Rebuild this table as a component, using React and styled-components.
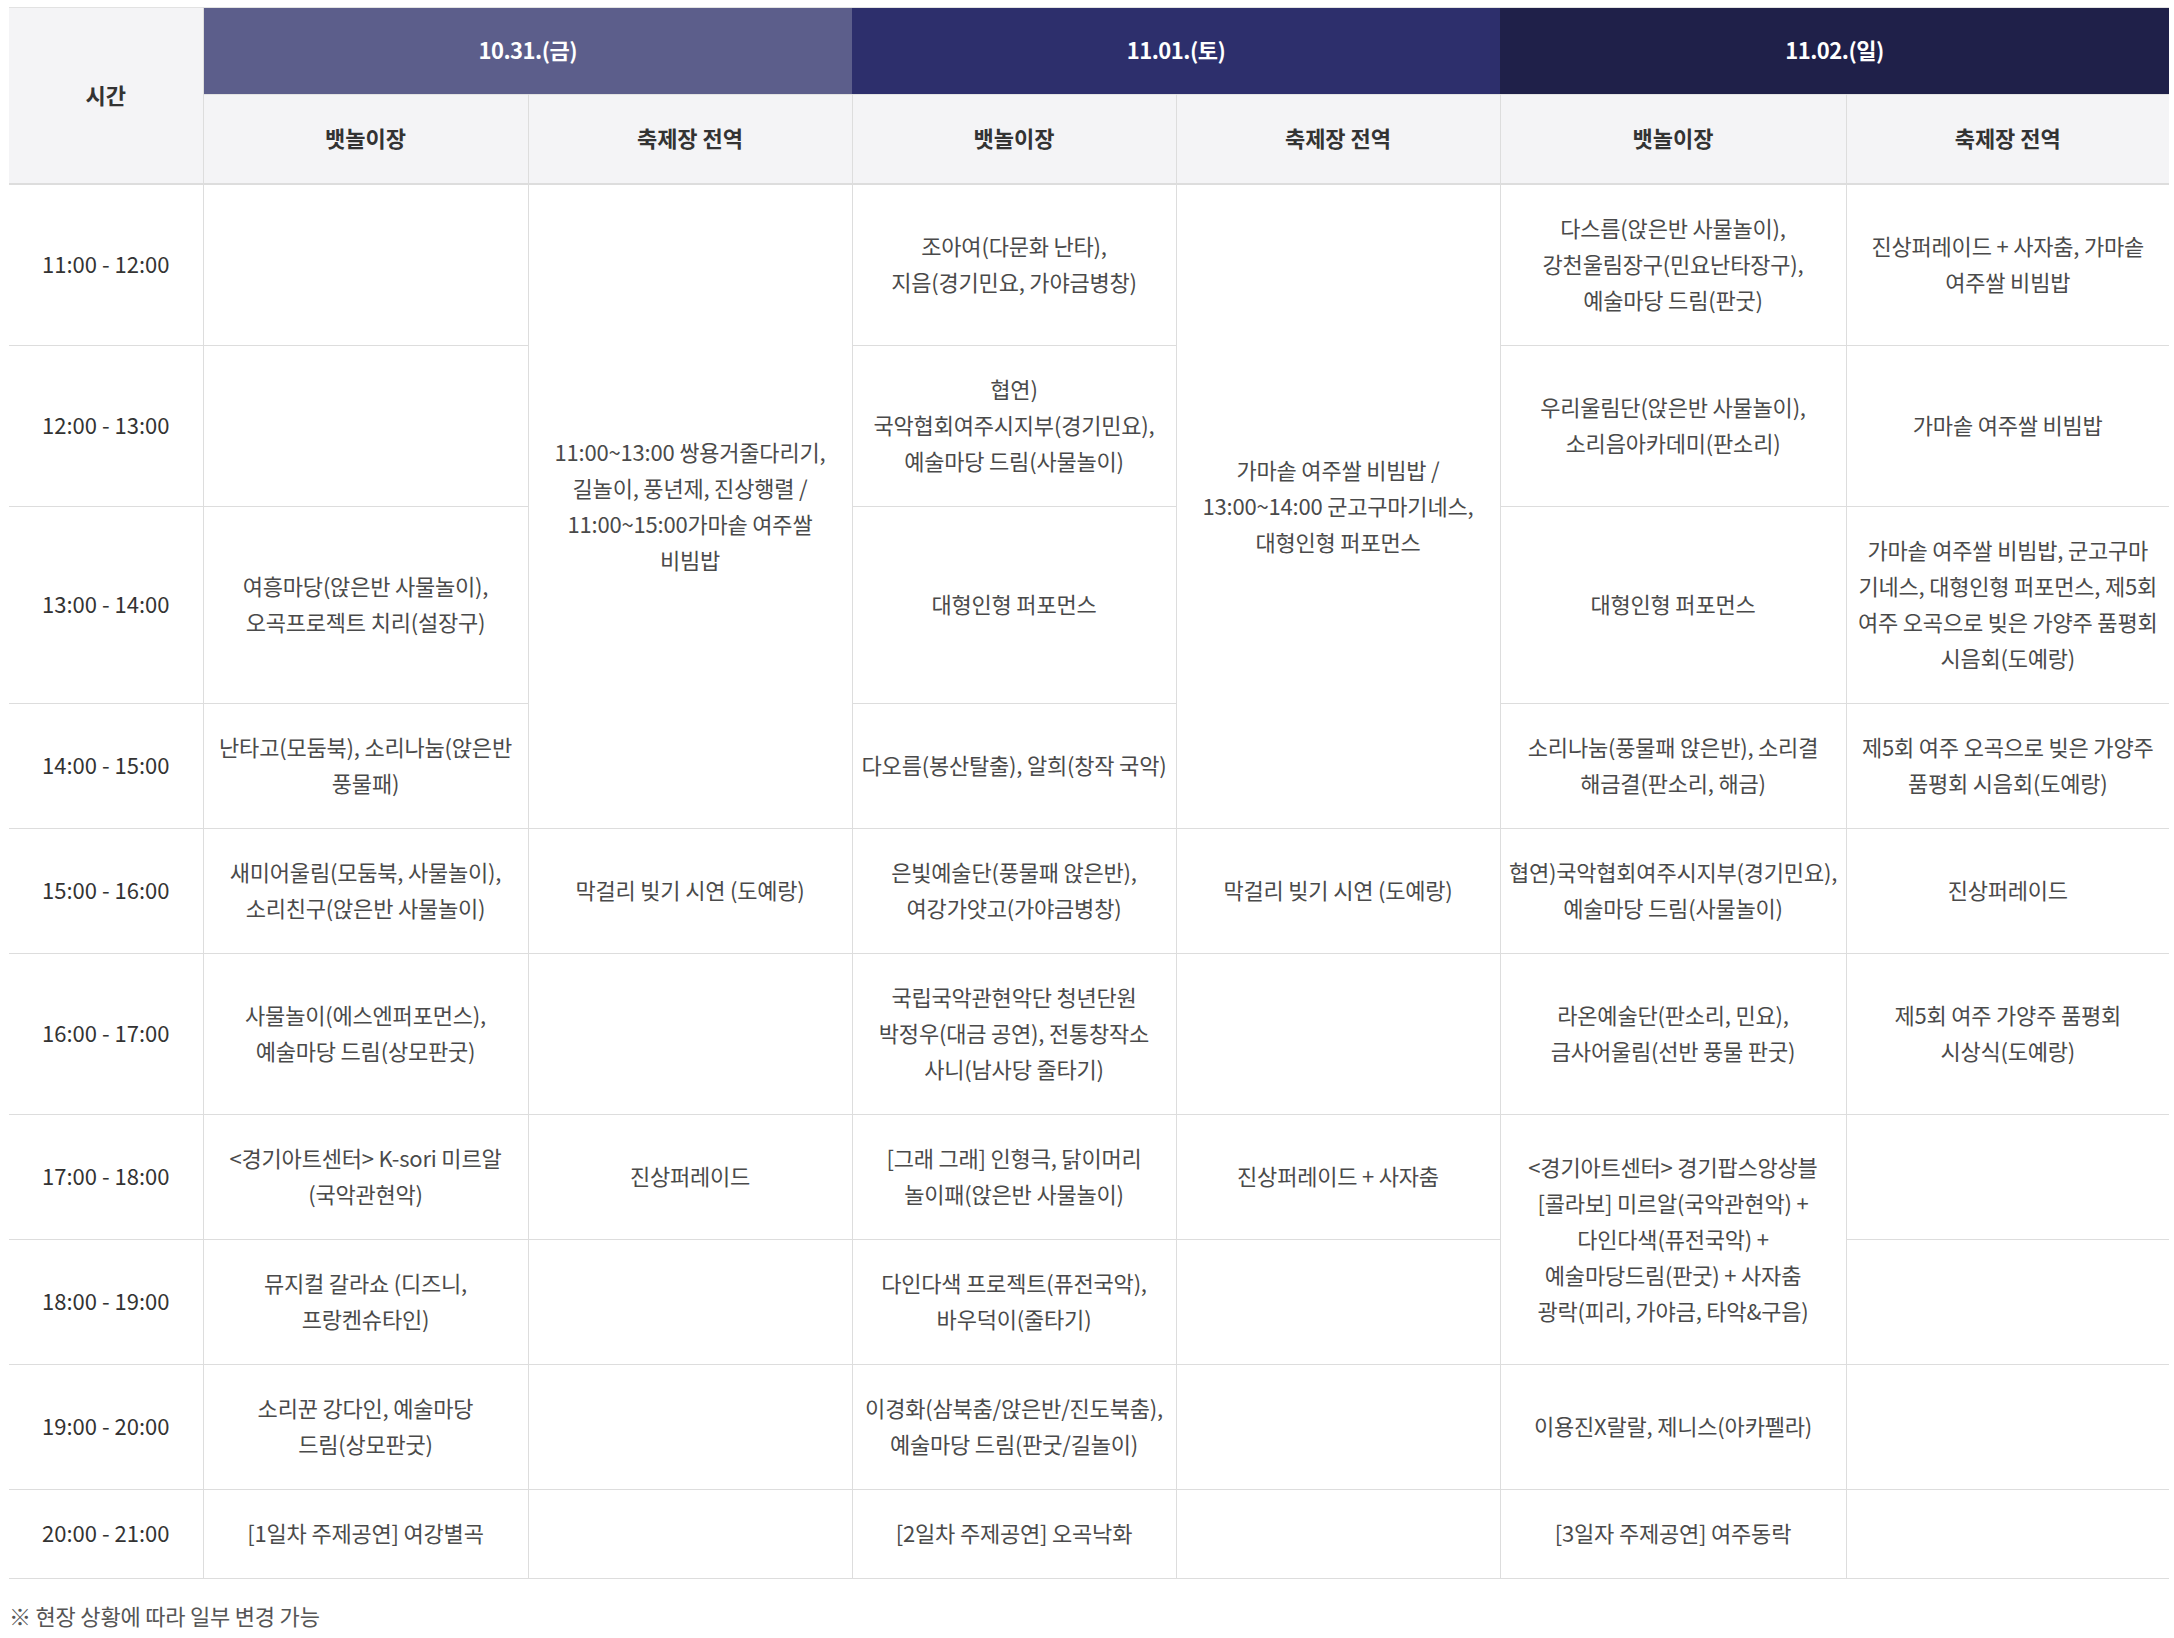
import React from "react";
import styled, { createGlobalStyle } from "styled-components";

const Global = createGlobalStyle`
  html, body { margin: 0; padding: 0; background: #ffffff; }
  body { font-family: "Noto Sans CJK KR", "Noto Sans", sans-serif; }
`;

const Page = styled.div`
  padding: 7px 5px 20px 9px;
`;

const Table = styled.table`
  width: 2160px;
  table-layout: fixed;
  border-collapse: collapse;
  border-top: 1px solid #e2e2e2;
  font-size: 22px;
  line-height: 36px;
  color: #4a4a4a;
  text-align: center;
`;

const DateCell = styled.th`
  background: ${(p) => p.$bg};
  color: #ffffff;
  font-weight: 700;
  padding: 23px 8px 27px;
  letter-spacing: -0.5px;
`;

const HeadCell = styled.th`
  background: #f4f4f6;
  color: #333333;
  font-weight: 700;
  padding: 24px 8px 28px;
  border: 1px solid #dddddd;
  border-bottom: 2px solid #dddddd;
  border-top-color: #e2e2e2;
  &:first-child { border-left: none; }
  &:last-child { border-right: none; }
`;

const TimeCell = styled.td`
  color: #333333;
  padding: 24px 4px 28px;
  border-bottom: 1px solid #dddddd;
  border-right: 1px solid #dddddd;
  vertical-align: middle;
`;

const Cell = styled.td`
  padding: 24px 3px 28px;
  border: 1px solid #dddddd;
  border-top: none;
  vertical-align: middle;
  letter-spacing: -0.2px;
  &:last-child { border-right: none; }
`;

const Note = styled.p`
  margin: 18px 0 0;
  font-size: 22px;
  line-height: 36px;
  color: #555555;
  letter-spacing: -0.2px;
`;

const cols = [194, 325, 324, 324, 324, 346, 323];

const days = [
  { label: "10.31.(금)", bg: "#5c5e8b" },
  { label: "11.01.(토)", bg: "#2d2f6c" },
  { label: "11.02.(일)", bg: "#1f2049" },
];

// each cell: null = covered by rowspan, [] = empty, {lines, span}
const rows = [
  {
    time: "11:00 - 12:00",
    cells: [
      [],
      { lines: ["11:00~13:00 쌍용거줄다리기,", "길놀이, 풍년제, 진상행렬 /", "11:00~15:00가마솥 여주쌀", "비빔밥"], span: 4 },
      ["조아여(다문화 난타),", "지음(경기민요, 가야금병창)"],
      { lines: ["가마솥 여주쌀 비빔밥 /", "13:00~14:00 군고구마기네스,", "대형인형 퍼포먼스"], span: 4 },
      ["다스름(앉은반 사물놀이),", "강천울림장구(민요난타장구),", "예술마당 드림(판굿)"],
      ["진상퍼레이드 + 사자춤, 가마솥", "여주쌀 비빔밥"],
    ],
  },
  {
    time: "12:00 - 13:00",
    cells: [
      [],
      null,
      ["협연)", "국악협회여주시지부(경기민요),", "예술마당 드림(사물놀이)"],
      null,
      ["우리울림단(앉은반 사물놀이),", "소리음아카데미(판소리)"],
      ["가마솥 여주쌀 비빔밥"],
    ],
  },
  {
    time: "13:00 - 14:00",
    cells: [
      ["여흥마당(앉은반 사물놀이),", "오곡프로젝트 치리(설장구)"],
      null,
      ["대형인형 퍼포먼스"],
      null,
      ["대형인형 퍼포먼스"],
      ["가마솥 여주쌀 비빔밥, 군고구마", "기네스, 대형인형 퍼포먼스, 제5회", "여주 오곡으로 빚은 가양주 품평회", "시음회(도예랑)"],
    ],
  },
  {
    time: "14:00 - 15:00",
    cells: [
      ["난타고(모둠북), 소리나눔(앉은반", "풍물패)"],
      null,
      ["다오름(봉산탈출), 알희(창작 국악)"],
      null,
      ["소리나눔(풍물패 앉은반), 소리결", "해금결(판소리, 해금)"],
      ["제5회 여주 오곡으로 빚은 가양주", "품평회 시음회(도예랑)"],
    ],
  },
  {
    time: "15:00 - 16:00",
    cells: [
      ["새미어울림(모둠북, 사물놀이),", "소리친구(앉은반 사물놀이)"],
      ["막걸리 빚기 시연 (도예랑)"],
      ["은빛예술단(풍물패 앉은반),", "여강가얏고(가야금병창)"],
      ["막걸리 빚기 시연 (도예랑)"],
      ["협연)국악협회여주시지부(경기민요),", "예술마당 드림(사물놀이)"],
      ["진상퍼레이드"],
    ],
  },
  {
    time: "16:00 - 17:00",
    cells: [
      ["사물놀이(에스엔퍼포먼스),", "예술마당 드림(상모판굿)"],
      [],
      ["국립국악관현악단 청년단원", "박정우(대금 공연), 전통창작소", "사니(남사당 줄타기)"],
      [],
      ["라온예술단(판소리, 민요),", "금사어울림(선반 풍물 판굿)"],
      ["제5회 여주 가양주 품평회", "시상식(도예랑)"],
    ],
  },
  {
    time: "17:00 - 18:00",
    cells: [
      ["<경기아트센터> K-sori 미르알", "(국악관현악)"],
      ["진상퍼레이드"],
      ["[그래 그래] 인형극, 닭이머리", "놀이패(앉은반 사물놀이)"],
      ["진상퍼레이드 + 사자춤"],
      { lines: ["<경기아트센터> 경기팝스앙상블", "[콜라보] 미르알(국악관현악) +", "다인다색(퓨전국악) +", "예술마당드림(판굿) + 사자춤", "광락(피리, 가야금, 타악&구음)"], span: 2 },
      [],
    ],
  },
  {
    time: "18:00 - 19:00",
    cells: [
      ["뮤지컬 갈라쇼 (디즈니,", "프랑켄슈타인)"],
      [],
      ["다인다색 프로젝트(퓨전국악),", "바우덕이(줄타기)"],
      [],
      null,
      [],
    ],
  },
  {
    time: "19:00 - 20:00",
    cells: [
      ["소리꾼 강다인, 예술마당", "드림(상모판굿)"],
      [],
      ["이경화(삼북춤/앉은반/진도북춤),", "예술마당 드림(판굿/길놀이)"],
      [],
      ["이용진X랄랄, 제니스(아카펠라)"],
      [],
    ],
  },
  {
    time: "20:00 - 21:00",
    cells: [
      ["[1일차 주제공연] 여강별곡"],
      [],
      ["[2일차 주제공연] 오곡낙화"],
      [],
      ["[3일자 주제공연] 여주동락"],
      [],
    ],
  },
];

function Lines({ lines }) {
  return lines.map((l, i) => (
    <React.Fragment key={i}>
      {i > 0 && <br />}
      {l}
    </React.Fragment>
  ));
}

export default function App() {
  return (
    <Page>
      <Global />
      <Table>
        <colgroup>
          {cols.map((w, i) => (
            <col key={i} style={{ width: w }} />
          ))}
        </colgroup>
        <thead>
          <tr>
            <HeadCell rowSpan={2}>시간</HeadCell>
            {days.map((d) => (
              <DateCell key={d.label} colSpan={2} $bg={d.bg}>
                {d.label}
              </DateCell>
            ))}
          </tr>
          <tr>
            {days.map((d) => (
              <React.Fragment key={d.label}>
                <HeadCell>뱃놀이장</HeadCell>
                <HeadCell>축제장 전역</HeadCell>
              </React.Fragment>
            ))}
          </tr>
        </thead>
        <tbody>
          {rows.map((r) => (
            <tr key={r.time}>
              <TimeCell>{r.time}</TimeCell>
              {r.cells.map((c, i) => {
                if (c === null) return null;
                if (Array.isArray(c))
                  return (
                    <Cell key={i}>
                      <Lines lines={c} />
                    </Cell>
                  );
                return (
                  <Cell key={i} rowSpan={c.span}>
                    <Lines lines={c.lines} />
                  </Cell>
                );
              })}
            </tr>
          ))}
        </tbody>
      </Table>
      <Note>※ 현장 상황에 따라 일부 변경 가능</Note>
    </Page>
  );
}
